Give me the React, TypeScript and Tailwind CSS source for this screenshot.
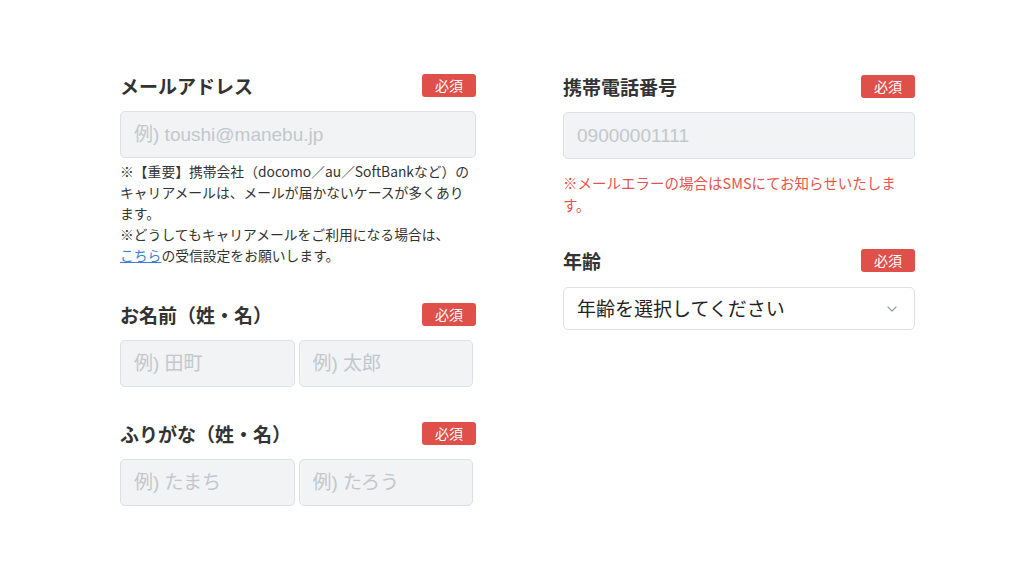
const jp = "font-['Noto_Sans_CJK_JP',sans-serif]";

const Badge = () => (
  <span className="flex h-[23px] w-[54px] items-center justify-center rounded-[3px] bg-[#e0504a] text-[14px] text-white">
    必須
  </span>
);

const Label = ({ text }: { text: string }) => (
  <div className="flex h-[24px] items-center justify-between">
    <span className="text-[19px] font-bold leading-none text-[#333333]">{text}</span>
    <Badge />
  </div>
);

const Field = ({ placeholder, className = "" }: { placeholder: string; className?: string }) => (
  <input
    readOnly
    placeholder={placeholder}
    className={`h-[47px] rounded-[5px] border border-[#dde1e5] bg-[#f1f3f5] px-[13px] font-['Liberation_Sans','Noto_Sans_CJK_JP',sans-serif] text-[19px] text-[#333] outline-none placeholder:text-[#c3c7cb] ${className}`}
  />
);

const App = () => {
  return (
    <div className={`flex h-[576px] w-[1024px] gap-[87px] bg-white pl-[120px] pt-[73px] ${jp}`}>
      <div className="flex w-[356px] flex-col">
        <Label text="メールアドレス" />
        <Field placeholder="例) toushi@manebu.jp" className="mt-[14px] w-full" />
        <p className="mt-[3px] text-[13.8px] leading-[21px] text-[#333]">
          ※【重要】携帯会社（docomo／au／SoftBankなど）のキャリアメールは、メールが届かないケースが多くあります。
          <br />
          ※どうしてもキャリアメールをご利用になる場合は、
          <br />
          <a className="text-[#3b7fd1] underline">こちら</a>の受信設定をお願いします。
        </p>

        <div className="mt-[36px]">
          <Label text="お名前（姓・名）" />
        </div>
        <div className="mt-[14px] flex w-[353px] gap-[4px]">
          <Field placeholder="例) 田町" className="w-0 flex-1" />
          <Field placeholder="例) 太郎" className="w-0 flex-1" />
        </div>

        <div className="mt-[34px]">
          <Label text="ふりがな（姓・名）" />
        </div>
        <div className="mt-[14px] flex w-[353px] gap-[4px]">
          <Field placeholder="例) たまち" className="w-0 flex-1" />
          <Field placeholder="例) たろう" className="w-0 flex-1" />
        </div>
      </div>

      <div className="flex w-[352px] flex-col pt-[1px]">
        <Label text="携帯電話番号" />
        <Field placeholder="09000001111" className="mt-[14px] w-full" />
        <p className="mt-[13px] text-[14.5px] leading-[22px] text-[#e5534b]">
          ※メールエラーの場合はSMSにてお知らせいたします。
        </p>

        <div className="mt-[32px]">
          <Label text="年齢" />
        </div>
        <div className="mt-[15px] flex h-[43px] items-center justify-between rounded-[5px] border border-[#dde1e5] bg-white pl-[13px] pr-[17px]">
          <span className="text-[19px] text-[#222]">年齢を選択してください</span>
          <svg width="10" height="6" viewBox="0 0 10 6" fill="none">
            <path d="M1 1l4 4 4-4" stroke="#9a9ea3" strokeWidth="1.2" strokeLinecap="round" strokeLinejoin="round" />
          </svg>
        </div>
      </div>
    </div>
  );
};

export default App;
